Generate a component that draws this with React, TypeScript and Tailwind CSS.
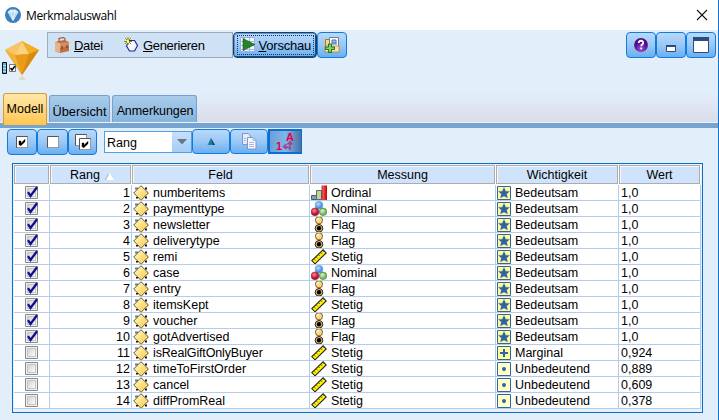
import React from "react";

const rows: [string, string, string, string][] = [
  ["numberitems", "Ordinal", "Bedeutsam", "1,0"],
  ["paymenttype", "Nominal", "Bedeutsam", "1,0"],
  ["newsletter", "Flag", "Bedeutsam", "1,0"],
  ["deliverytype", "Flag", "Bedeutsam", "1,0"],
  ["remi", "Stetig", "Bedeutsam", "1,0"],
  ["case", "Nominal", "Bedeutsam", "1,0"],
  ["entry", "Flag", "Bedeutsam", "1,0"],
  ["itemsKept", "Stetig", "Bedeutsam", "1,0"],
  ["voucher", "Flag", "Bedeutsam", "1,0"],
  ["gotAdvertised", "Flag", "Bedeutsam", "1,0"],
  ["isRealGiftOnlyBuyer", "Stetig", "Marginal", "0,924"],
  ["timeToFirstOrder", "Stetig", "Unbedeutend", "0,889"],
  ["cancel", "Stetig", "Unbedeutend", "0,609"],
  ["diffPromReal", "Stetig", "Unbedeutend", "0,378"],
];

const GRID = "grid grid-cols-[36px_82px_178px_186px_123px_82px]";
const BTN =
  "flex items-center justify-center shrink-0 rounded-[4px] border border-[#0f7cdf] bg-linear-to-b from-[#b9d8fa] via-[#9ac8f6] to-[#69aff0]";

function Gradients() {
  return (
    <svg className="absolute size-0">
      <defs>
        <linearGradient id="gold" x1="0.2" y1="0.2" x2="0.8" y2="0.8">
          <stop offset="0" stopColor="#fff4b4" />
          <stop offset="1" stopColor="#fcd057" />
        </linearGradient>
        <radialGradient id="red" cx=".4" cy=".35">
          <stop offset="0" stopColor="#ee8c98" />
          <stop offset="1" stopColor="#b80c28" />
        </radialGradient>
        <radialGradient id="green" cx=".4" cy=".35">
          <stop offset="0" stopColor="#d8f2be" />
          <stop offset="1" stopColor="#79b95e" />
        </radialGradient>
        <radialGradient id="blue" cx=".4" cy=".35">
          <stop offset="0" stopColor="#b8dcff" />
          <stop offset="1" stopColor="#4b91de" />
        </radialGradient>
        <linearGradient id="bar" x1="0" x2="1">
          <stop offset="0" stopColor="#ff6a6a" />
          <stop offset="1" stopColor="#c40000" />
        </linearGradient>
        <linearGradient id="grayBox" x1="0" y1="0" x2="1" y2="1">
          <stop offset="0" stopColor="#cfcfcf" />
          <stop offset="1" stopColor="#ffffff" />
        </linearGradient>
        <radialGradient id="purple" cx=".5" cy=".8">
          <stop offset="0" stopColor="#a74ddc" />
          <stop offset="1" stopColor="#4b0f86" />
        </radialGradient>
        <linearGradient id="orange" x1="0" y1="0" x2="0" y2="1">
          <stop offset="0" stopColor="#f4ae2c" />
          <stop offset="1" stopColor="#dc8b10" />
        </linearGradient>
      </defs>
    </svg>
  );
}

function FieldIcon() {
  return (
    <svg width="16" height="16" viewBox="0 0 16 16" className="shrink-0">
      <path d="M2 2.500h3v2H2z" fill="#777" />
      <path d="M12 2.500h2v2h-2zM12 11.500h2v2h-2zM3 12h2v1.500H3z" fill="#111" />
      <path d="M8 .7 15.300 8 8 15.300.7 8z" fill="url(#gold)" stroke="#5f5638" strokeWidth="1" />
    </svg>
  );
}

function MeasureIcon({ kind }: { kind: string }) {
  if (kind === "Ordinal")
    return (
      <svg width="16" height="16" viewBox="0 0 16 16" className="shrink-0">
        <path d="M.5 10.500h5v4h-5z" fill="#6aa5dc" stroke="#555" />
        <path d="M5.500 5.500h5v9h-5z" fill="#b8d69a" stroke="#666" />
        <path d="M11 .5h5V15h-5z" fill="url(#bar)" />
        <path d="M11 .5V15" fill="none" stroke="#a02020" strokeWidth=".8" />
      </svg>
    );
  if (kind === "Nominal")
    return (
      <svg width="16" height="16" viewBox="0 0 16 16" className="shrink-0">
        <circle cx="8" cy="4.200" r="3.900" fill="url(#blue)" stroke="#6a9fd8" strokeWidth=".5" />
        <circle cx="4" cy="10.800" r="3.900" fill="url(#red)" stroke="#951428" strokeWidth=".5" />
        <circle cx="12" cy="10.800" r="3.700" fill="url(#green)" stroke="#4f8148" strokeWidth=".8" />
      </svg>
    );
  if (kind === "Flag")
    return (
      <svg width="16" height="16" viewBox="0 0 16 16" className="shrink-0">
        <circle cx="8" cy="3.300" r="3.600" fill="#ffd57a" stroke="#6b5530" strokeWidth=".9" />
        <path d="M5.300 3.200a3 3 0 0 1 3-2.600l-.7 3.200z" fill="#fff3c4" />
        <circle cx="8" cy="11.300" r="3.800" fill="#f0bd66" stroke="#111" strokeWidth=".9" />
        <circle cx="8" cy="11.300" r="2.200" fill="#000" />
      </svg>
    );
  return (
    <svg width="16" height="16" viewBox="0 0 16 16" className="shrink-0">
      <path d="M.8 11.600 12.100.8l3.100 3.100L4 14.800z" fill="#fff200" stroke="#222" strokeWidth="1.100" />
      <path d="m3.200 10 1.300 1.300M5.400 8l1.300 1.300M7.600 5.800l1.300 1.300M9.800 3.700l1.300 1.300M12 1.700 13.200 2.900" stroke="#444" strokeWidth=".8" />
    </svg>
  );
}

function ImportanceIcon({ kind }: { kind: string }) {
  return (
    <svg width="14" height="14" viewBox="0 0 14 14" className="shrink-0">
      <path d="M.5.5h13v13H.5z" fill={kind === "Unbedeutend" ? "#ffffc8" : "#ffff99"} stroke="#3063a5" />
      {kind === "Bedeutsam" && (
        <path d="m7 1.500 1.700 3.700 3.800.3-2.900 2.600.9 3.900L7 10l-3.500 2 .9-3.900-2.900-2.600 3.800-.3z" fill="#3063a5" stroke="#3063a5" strokeWidth=".3" />
      )}
      {kind === "Marginal" && <path d="M6 3h2v3h3v2H8v3H6V8H3V6h3z" fill="#3063a5" />}
      {kind === "Unbedeutend" && <circle cx="7" cy="7" r="2" fill="#3063a5" />}
    </svg>
  );
}

function RowCheck({ on }: { on: boolean }) {
  return (
    <svg width="13" height="13" viewBox="0 0 13 13">
      <path d="M.5.5h12v12H.5z" fill="#f0f0f0" stroke="#898989" />
      <path d="M2.500 2.500h8v8h-8z" fill="url(#grayBox)" stroke="#c3c3c3" />
      {on && <path d="M3 6.200 5.500 10 12 1.200" fill="none" stroke="#100e8b" strokeWidth="2.300" />}
    </svg>
  );
}

function BoxCheck({ on, x = 0 }: { on: boolean; x?: number }) {
  return (
    <g transform={`translate(${x} ${x})`}>
      <path d="M.5.5h11v11H.5z" fill="#fff" stroke="#555" />
      <path d="M11.500 1v10.500H1" fill="none" stroke="#999" />
      {on && <path d="M3 5h2v2.300l4-4v2.400L5 9.500H4L3 8.500z" fill="#000" stroke="#000" strokeWidth=".4" />}
    </g>
  );
}

function Header({ children }: { children?: React.ReactNode }) {
  return (
    <div className="mr-px flex h-[19px] items-center justify-center border border-[#adadad] bg-[#cfe3fc] pt-[2px] shadow-[inset_1px_1px_0_#f4f8fd]">
      {children}
    </div>
  );
}

const CELL = "flex items-center border-r border-b border-[#b3cdea] whitespace-nowrap overflow-hidden";
const LABEL = "pt-[2px]";
const TAB =
  "flex h-[27px] items-center justify-center rounded-t-[3px] border border-b-0 border-[#6ea3d2] bg-linear-to-b from-[#a9cce9] to-[#87b4dd] pt-[4px]";

export default function App() {
  return (
    <div className="relative flex h-[420px] w-[719px] flex-col overflow-hidden border-r border-[#0f73cf] bg-[#e3eefb] font-['Liberation_Sans',Arial,sans-serif] text-[12.5px] leading-[15px] text-black">
      <Gradients />
      <div className="flex h-[30px] shrink-0 items-center bg-white pr-[9px] pl-[5px]">
        <svg width="16" height="16" viewBox="0 0 16 16">
          <circle cx="8" cy="8" r="8" fill="#3d7fbf" />
          <path d="m3 5 2.500-2h5L13 5l-5 8.500z" fill="#a7d4f2" stroke="#e5f5ff" strokeWidth=".8" />
          <path d="M3 5h10M5.500 3 8 13 10.500 3M5.500 5 8 3l2.500 2" fill="none" stroke="#fff" strokeWidth=".7" />
        </svg>
        <span className="ml-[5px] font-['Open_Sans',sans-serif] text-[12px] tracking-[-0.38px]">Merkmalauswahl</span>
        <svg width="12" height="12" viewBox="0 0 12 12" className="mr-[1px] ml-auto">
          <path d="m1 1 10 10M11 1 1 11" stroke="#111" strokeWidth="1.100" />
        </svg>
      </div>

      <div className="flex h-[63px] shrink-0 items-start">
        <svg width="47" height="52" viewBox="0 30 47 52">
          <path d="m5 50 17-9 17 9-17 25z" fill="url(#orange)" />
          <path d="M5 50 22 41l-7 14z" fill="#f7c566" />
          <path d="m22 41-7 14 14-1z" fill="#f9d27f" />
          <path d="m22 41 17 9-10 4z" fill="#f3ae28" />
          <path d="m5 50 10 5 7 19z" fill="#f3b437" />
          <path d="m15 55 14-1-7 20z" fill="#e99b1b" />
          <path d="m29 54 10-4-17 25z" fill="#d98a0d" />
          <path d="m18 80 4-5 4 5z" fill="#e4cfa5" opacity=".65" />
          <path d="M2.500 62.500h4v11h-4z" fill="#4fb5d8" stroke="#111" />
          <path d="M3 65.500h3M3 68.500h3M3 71.500h3" stroke="#d8f3fb" strokeWidth=".7" />
          <path d="M9.500 64.500h6v7h-6z" fill="#fff" stroke="#777" />
          <path d="m10.500 68 1.500 2 3-4" fill="none" stroke="#000" strokeWidth="1.400" />
        </svg>
        <div className="mt-[2px] flex h-[26px] w-[186px] items-center border border-[#9eacbd] bg-[#cfe1f4] pl-[6px] text-[13px]">
          <svg width="16" height="16" viewBox="0 0 16 16">
            <path d="m1 5 9-2 5 2v9l-9 2-5-2z" fill="#bd6f42" />
            <path d="m1 5 5 1v10l-5-2z" fill="#e7b18b" />
            <path d="m6 6 9-1v4l-9 2z" fill="#d48d60" />
            <path d="M5 5V1.500l4-1 2 1V4" fill="none" stroke="#9f5934" strokeWidth="1.200" />
            <path d="M8 9v3M13 8v3" stroke="#70351a" />
          </svg>
          <span className="ml-1 w-[29px] pt-px tracking-[-0.3px]"><u>D</u>atei</span>
          <svg width="16" height="16" viewBox="0 0 16 16" className="ml-[21px]">
            <path d="M5.500 3.500h5l3 5-3 5.500h-5l-3-5z" fill="#f5f9ff" stroke="#27279b" strokeWidth="1.200" />
            <path d="M0 4.500h8M4 0v8M1 1l6 6M7 1 1 7" stroke="#8b8b00" strokeWidth="1" />
            <path d="M3 3h2v3H3z" fill="#ffff37" />
          </svg>
          <span className="ml-[3px] pt-px tracking-[-0.35px]"><u>G</u>enerieren</span>
        </div>
        <div className={`${BTN} mt-[2px] h-[26px] w-[84px] border-[#173d69] shadow-[inset_-1px_-1px_0_#164d86,inset_1px_1px_0_#6199d5]`}>
          <div className="flex h-[20px] w-[77px] items-center border border-dotted border-[#163957] pl-[2px] text-[13px]">
            <svg width="16" height="16" viewBox="0 0 16 16" className="shrink-0">
              <path d="M.5.5h14v14H.5z" fill="#f6f8ff" stroke="#9baade" />
              <path d="M0 4.500h15M0 8.500h15M0 12.500h15M4.500 0v15M9.500 0v15" stroke="#a9b5df" />
              <path d="m3 1.500 12 6-12 6z" fill="#218525" stroke="#105c15" strokeWidth=".6" />
            </svg>
            <span className="ml-[3px] pt-px tracking-[-0.2px]"><u>V</u>orschau</span>
          </div>
        </div>
        <div className={`${BTN} mt-[2px] h-[26px] w-[30px]`}>
          <svg width="18" height="18" viewBox="0 0 18 18">
            <path d="M2.500 3.500h11v11h-11z" fill="#f6d785" stroke="#a47c2c" />
            <path d="M6.500 1.500h9v12h-9z" fill="#fff" stroke="#67829e" />
            <path d="M9 4h4v3H9zM8 8h6" fill="#9fc4ee" stroke="#4372a7" />
            <path d="M2 10h14v6H2z" fill="#fae3a0" stroke="#a47c2c" strokeWidth=".7" />
            <path d="M5.500 8h3v3h3v2.500h-3v3h-3v-3H2.500V11h3z" fill="#80d164" stroke="#176b16" strokeWidth=".9" />
          </svg>
        </div>
        <div className="mt-[2px] mr-[2px] ml-auto flex">
          <div className={`${BTN} h-[26px] w-[30px]`}>
            <svg width="14" height="14" viewBox="0 0 14 14">
              <circle cx="7" cy="7" r="6.900" fill="url(#purple)" />
              <path d="M4.700 5c0-3.200 4.900-2.800 4.500 0-.2 1.300-2 1.400-2 3.200M7.200 9.600v1.700" fill="none" stroke="#fff" strokeWidth="1.800" />
            </svg>
          </div>
          <div className={`${BTN} h-[26px] w-[30px]`}>
            <svg width="10" height="7" viewBox="0 0 10 7" className="mt-[7px]">
              <path d="M.5.5h9v6h-9z" fill="#fff" stroke="#294d7d" /><path d="M0 0h10v2H0z" fill="#294d7d" />
            </svg>
          </div>
          <div className={`${BTN} h-[26px] w-[30px]`}>
            <svg width="16" height="16" viewBox="0 0 16 16">
              <path d="M.5.5h15v15H.5z" fill="#fff" stroke="#294d7d" /><path d="M0 0h16v4H0z" fill="#294d7d" />
            </svg>
          </div>
        </div>
      </div>

      <div className="flex h-[35px] shrink-0 flex-col bg-linear-to-b from-[#e3eefb] to-[#d8d9e6]">
        <div className="z-10 flex h-[29px] items-end gap-[2px] pl-[3px]">
          <div className="mb-[-3px] flex h-[32px] w-[44px] items-center justify-center rounded-t-[3px] border border-b-0 border-[#d69a33] bg-linear-to-b from-[#ffe7a8] to-[#ffc54c] text-[12.5px]">
            Modell
          </div>
          <div className={`${TAB} w-[61px] text-[12.8px]`}>Übersicht</div>
          <div className={`${TAB} w-[85px] pl-[1px] text-[12.5px] tracking-[-0.1px]`}>Anmerkungen</div>
        </div>
        <div className="h-[6px] border-t border-[#e8f2fb] bg-[#76a3d0]" />
      </div>

      <div className="flex h-[35px] shrink-0 items-start pt-px pl-[7px]">
        <div className={`${BTN} h-[26px] w-[30px]`}>
          <svg width="12" height="12"><BoxCheck on /></svg>
        </div>
        <div className={`${BTN} h-[26px] w-[31px]`}>
          <svg width="12" height="12"><BoxCheck on={false} /></svg>
        </div>
        <div className={`${BTN} h-[26px] w-[29px]`}>
          <svg width="16" height="16"><BoxCheck on={false} /><BoxCheck on x={4} /></svg>
        </div>
        <div className="mt-[2px] ml-[7px] flex h-[22px] w-[88px] border border-[#4ca0e8] bg-white">
          <span className="grow pt-[4px] pl-[2px] text-[12.5px]">Rang</span>
          <span className="flex w-[19px] items-center justify-center bg-linear-to-b from-[#c8e0fa] to-[#a3cdf8]">
            <svg width="10" height="6"><path d="M0 0h10L5 5.500z" fill="#65758b" /></svg>
          </span>
        </div>
        <div className={`${BTN} h-[25px] w-[38px]`}>
          <svg width="8" height="8"><path d="M0 7 4 0v7z" fill="#7fa3b4" /><path d="M4 0 7 7H1z" fill="#0884a8" /><path d="m4 0 4 7H6z" fill="#333" /></svg>
        </div>
        <div className={`${BTN} h-[25px] w-[38px]`}>
          <svg width="15" height="17" viewBox="0 0 15 17">
            <path d="M.5.5H6l2.500 2.500v8.500h-8z" fill="#e3eafa" stroke="#8395c5" />
            <path d="M5.500 4.500H11l3 3v8.500H5.500z" fill="#f5f8ff" stroke="#8395c5" />
            <path d="M11 4.500v3h3M7 9.500h5M7 11.500h5M7 13.500h5M2 5.500h2M2 7.500h2" fill="none" stroke="#a9b7dc" />
          </svg>
        </div>
        <div className="flex h-[25px] w-[34px] items-center justify-center border-2 border-r border-[#0b6dd6] bg-linear-to-r from-[#6a9fd8] via-[#80b5ec] to-[#4a72a0]">
          <svg width="19" height="20" viewBox="0 0 19 20" fontFamily="Liberation Sans" fontWeight="700" fontSize="11" fill="#e60044">
            <text x="10" y="8.500">A</text><text x="0" y="18">1</text>
            <path d="M14 18v-5M14 16l-5-1.500M14 14V10m-2.500 2.500L14 10l2.500 2.500M10.500 12l-3 2.500 3 2.500" fill="none" stroke="#a3438f" strokeWidth="1.600" />
          </svg>
        </div>
      </div>

      <div className="ml-[12px] h-[250px] w-[691px] shrink-0 border border-[#096dca] bg-[#e8f1fb] p-px">
        <div className={`${GRID} h-[20px] bg-white`}>
          <Header />
          <Header>
            <span className="ml-[3px]">Rang</span>
            <svg width="10" height="8" className="ml-[4px]"><path d="m0 8 5-8 5 8z" fill="#fff" /><path d="m0 8 5-8v3L2 8z" fill="#bdc4cc" /></svg>
          </Header>
          <Header>Feld</Header>
          <Header>Messung</Header>
          <Header>Wichtigkeit</Header>
          <Header>Wert</Header>
        </div>
        {rows.map(([field, measure, importance, value], i) => (
          <div key={field} className={`${GRID} h-[16px] bg-white`}>
            <div className={`${CELL} justify-center`}><RowCheck on={i < 10} /></div>
            <div className={`${CELL} justify-end pr-px`}><span className={LABEL}>{i + 1}</span></div>
            <div className={`${CELL} gap-[4px] pl-[1px]`}>
              <FieldIcon />
              <span className={field.length > 17 ? "pt-[2px] tracking-[-0.15px]" : LABEL}>{field}</span>
            </div>
            <div className={`${CELL} gap-[4px] pl-[1px]`}><MeasureIcon kind={measure} /><span className={LABEL}>{measure}</span></div>
            <div className={`${CELL} gap-[4px] pl-[1px]`}><ImportanceIcon kind={importance} /><span className={LABEL}>{importance}</span></div>
            <div className={`${CELL} pl-[2px]`}><span className={LABEL}>{value}</span></div>
          </div>
        ))}
      </div>
    </div>
  );
}
